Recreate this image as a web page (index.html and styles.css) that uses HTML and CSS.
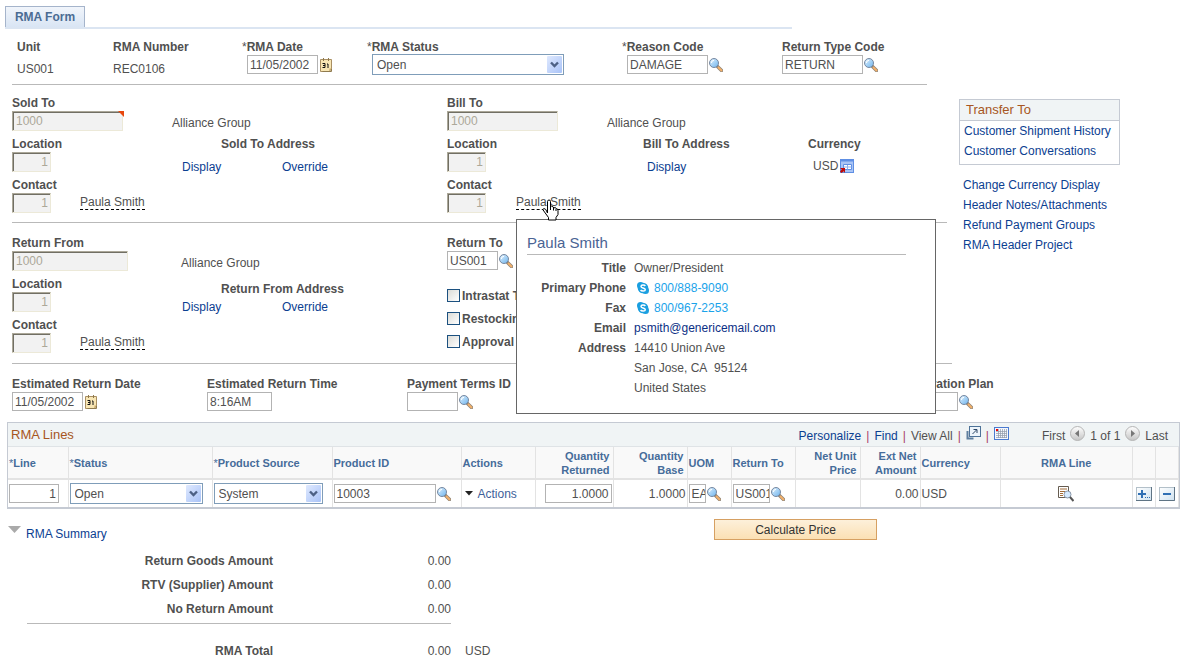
FILE: index.html
```html
<!DOCTYPE html>
<html lang="en">
<head>
    <meta charset="UTF-8">
    <meta name="viewport" content="width=device-width, initial-scale=1.0">
    <title>RMA Form</title>
    <link rel="stylesheet" href="styles.css">
</head>
<body>
    <!-- Shared icons -->
    <svg class="sprite" width="0" height="0" aria-hidden="true">
        <defs>
            <linearGradient id="glass" x1="0" y1="0" x2="1" y2="1">
                <stop offset="0" stop-color="#e3f2fd"/>
                <stop offset="1" stop-color="#6db4ee"/>
            </linearGradient>
            <linearGradient id="arrow-bg" x1="0" y1="0" x2="1" y2="1">
                <stop offset="0" stop-color="#dfe9fe"/>
                <stop offset="1" stop-color="#a9c3f8"/>
            </linearGradient>
            <linearGradient id="round-bg" x1="0" y1="0" x2="0" y2="1">
                <stop offset="0" stop-color="#ffffff"/>
                <stop offset="1" stop-color="#c4c4c4"/>
            </linearGradient>
            <linearGradient id="button-bg" x1="0" y1="0" x2="1" y2="1">
                <stop offset="0" stop-color="#ffffff"/>
                <stop offset="1" stop-color="#cfe2f0"/>
            </linearGradient>
        </defs>
        <symbol id="lens" viewBox="0 0 14 14">
            <path d="M8.500 8.500l4 4" stroke="#8d8478" stroke-width="3.400" stroke-linecap="square"/>
            <path d="M9 9l4 4" stroke="#f3b06a" stroke-width="2"/>
            <circle cx="5" cy="5" r="4.500" fill="url(#glass)" stroke="#7788a0"/>
            <path d="M2.400 5a2.600 2.600 0 0 1 2.600-2.600" fill="none" stroke="#fff"/>
        </symbol>
        <symbol id="calendar" viewBox="0 0 12 14">
            <path d="M.5 1.500h11v9l-2 3h-9z" fill="#f8e6b4" stroke="#a98f62"/>
            <path d="M11.500 10.500v3h-9" fill="none" stroke="#8f7a4e"/>
            <path d="M9.500 13.500v-3h2z" fill="#c9a868"/>
            <path d="M3.500 0v3M8.500 0v3" stroke="#8f7a4e"/>
            <path d="M2.500 5.500h2.500v4H2.500M3 7.500h2M7 6h1v4" fill="none" stroke="#111"/>
        </symbol>
        <symbol id="dropdown" viewBox="0 0 15 17">
            <rect width="15" height="17" rx="1" fill="url(#arrow-bg)"/>
            <path d="M4 6.500l3.500 3.500 3.500-3.500" fill="none" stroke="#4d6185" stroke-width="2.400"/>
        </symbol>
        <symbol id="skype" viewBox="0 0 12 12">
            <circle cx="3.500" cy="3.500" r="3.500" fill="#1a9fe0"/>
            <circle cx="8.500" cy="8.500" r="3.500" fill="#1a9fe0"/>
            <circle cx="6" cy="6" r="5.300" fill="#1a9fe0"/>
            <path d="M8.300 4C7.500 2.700 4 2.700 4 4.400S8.300 5.900 8.300 7.700 4.500 9.500 3.600 8" fill="none" stroke="#fff" stroke-width="1.500"/>
        </symbol>
        <symbol id="currency-window" viewBox="0 0 14 14">
            <rect x=".5" y=".5" width="13" height="13" fill="#a9c4f5" stroke="#5f8fe4"/>
            <path d="M1 1.500h12" stroke="#5f8fe4" stroke-width="2"/>
            <path d="M3.500 5.500h8v5h-8z" fill="#fff" stroke="#5f8fe4"/>
            <path d="M4 8h7.500M7.500 6v4.500" stroke="#8fb0ee"/>
            <path d="M0 9h5v5L3.700 12.300 1.500 14 0 12.500 1.700 10.500z" fill="#c00a0a"/>
        </symbol>
    </svg>

    <div class="layout">
        <main>
            <nav class="tabs">
                <a class="tab" href="#">RMA Form</a>
            </nav>

            <section class="form-header">
                <div class="field">
                    <span class="label">Unit</span>
                    <span class="value">US001</span>
                </div>
                <div class="field">
                    <span class="label">RMA Number</span>
                    <span class="value">REC0106</span>
                </div>
                <div class="field required">
                    <label for="rma-date"><b>*</b>RMA Date</label>
                    <div class="control">
                        <input class="w-date" id="rma-date" type="text" value="11/05/2002">
                        <button class="icon-button" type="button" aria-label="Choose RMA date"><svg width="12" height="14"><use href="#calendar"/></svg></button>
                    </div>
                </div>
                <div class="field required">
                    <label for="rma-status"><b>*</b>RMA Status</label>
                    <div class="control">
                        <span class="select w-status">
                            <select id="rma-status"><option>Open</option></select>
                            <svg width="15" height="17"><use href="#dropdown"/></svg>
                        </span>
                    </div>
                </div>
                <div class="field required">
                    <label for="reason-code"><b>*</b>Reason Code</label>
                    <div class="control">
                        <input class="w-code" id="reason-code" type="text" value="DAMAGE">
                        <button class="icon-button" type="button" aria-label="Look up reason code"><svg width="14" height="14"><use href="#lens"/></svg></button>
                    </div>
                </div>
                <div class="field">
                    <label for="return-type">Return Type Code</label>
                    <div class="control">
                        <input class="w-code" id="return-type" type="text" value="RETURN">
                        <button class="icon-button" type="button" aria-label="Look up return type code"><svg width="14" height="14"><use href="#lens"/></svg></button>
                    </div>
                </div>
            </section>

            <section class="parties">
                <div class="party">
                    <div class="party-row">
                        <div class="field">
                            <label for="sold-to">Sold To</label>
                            <span class="flagged"><input class="w-party" id="sold-to" type="text" value="1000" disabled></span>
                        </div>
                        <span class="party-name">Alliance Group</span>
                    </div>
                    <div class="party-row">
                        <div class="field">
                            <label for="sold-location">Location</label>
                            <input class="w-short number" id="sold-location" type="text" value="1" disabled>
                        </div>
                        <div class="address">
                            <h3>Sold To Address</h3>
                            <div class="address-links"><a href="#">Display</a><a href="#">Override</a></div>
                        </div>
                    </div>
                    <div class="party-row contact">
                        <div class="field">
                            <label for="sold-contact">Contact</label>
                            <input class="w-short number" id="sold-contact" type="text" value="1" disabled>
                        </div>
                        <div class="contact-card"><a class="contact-link" href="#">Paula Smith</a></div>
                    </div>
                </div>

                <div class="party bill-to">
                    <div class="party-row">
                        <div class="field">
                            <label for="bill-to">Bill To</label>
                            <input class="w-party" id="bill-to" type="text" value="1000" disabled>
                        </div>
                        <span class="party-name">Alliance Group</span>
                    </div>
                    <div class="party-row">
                        <div class="field">
                            <label for="bill-location">Location</label>
                            <input class="w-short number" id="bill-location" type="text" value="1" disabled>
                        </div>
                        <div class="address">
                            <h3>Bill To Address</h3>
                            <div class="address-links"><a href="#">Display</a></div>
                        </div>
                        <div class="currency">
                            <h3>Currency</h3>
                            <div class="currency-value">USD<button class="icon-button" type="button" aria-label="Currency details"><svg width="14" height="14"><use href="#currency-window"/></svg></button></div>
                        </div>
                    </div>
                    <div class="party-row contact">
                        <div class="field">
                            <label for="bill-contact">Contact</label>
                            <input class="w-short number" id="bill-contact" type="text" value="1" disabled>
                        </div>
                        <div class="contact-card">
                            <a class="contact-link" href="#">Paula Smith</a>
                            <div class="popup">
                                <h2>Paula Smith</h2>
                                <dl>
                                    <dt>Title</dt>
                                    <dd>Owner/President</dd>
                                    <dt>Primary Phone</dt>
                                    <dd><a class="phone" href="#"><svg width="12" height="12"><use href="#skype"/></svg>800/888-9090</a></dd>
                                    <dt>Fax</dt>
                                    <dd><a class="phone" href="#"><svg width="12" height="12"><use href="#skype"/></svg>800/967-2253</a></dd>
                                    <dt>Email</dt>
                                    <dd><a class="email" href="#">psmith@genericemail.com</a></dd>
                                    <dt>Address</dt>
                                    <dd>14410 Union Ave<br>San Jose, CA&nbsp; 95124<br>United States</dd>
                                </dl>
                            </div>
                            <svg class="pointer" width="17" height="22" viewBox="0 0 17 22" aria-hidden="true">
                                <path d="M5.500 14V2.500a1.500 1.500 0 0 1 3 0V8l1-.8 1.800.8.7 1 1.300-.6 1.200 1.400 1 .2.500 1.500v4l-2 3V21H6.500v-2.500L2.500 13 .8 10.500 2 9.500l1.800 1z" fill="#fff" stroke="#000"/>
                                <path d="M8.500 7v4M11.500 8v3.500M14 9.500V12" stroke="#000"/>
                            </svg>
                        </div>
                    </div>
                </div>
            </section>

            <section class="parties return-parties">
                <div class="party return-from">
                    <div class="party-row">
                        <div class="field">
                            <label for="return-from">Return From</label>
                            <input class="w-party" id="return-from" type="text" value="1000" disabled>
                        </div>
                        <span class="party-name">Alliance Group</span>
                    </div>
                    <div class="party-row">
                        <div class="field">
                            <label for="from-location">Location</label>
                            <input class="w-short number" id="from-location" type="text" value="1" disabled>
                        </div>
                        <div class="address">
                            <h3>Return From Address</h3>
                            <div class="address-links"><a href="#">Display</a><a href="#">Override</a></div>
                        </div>
                    </div>
                    <div class="party-row contact">
                        <div class="field">
                            <label for="from-contact">Contact</label>
                            <input class="w-short number" id="from-contact" type="text" value="1" disabled>
                        </div>
                        <div class="contact-card"><a class="contact-link" href="#">Paula Smith</a></div>
                    </div>
                </div>

                <div class="return-to">
                    <div class="field">
                        <label for="return-to">Return To</label>
                        <div class="control">
                            <input class="w-unit" id="return-to" type="text" value="US001">
                            <button class="icon-button" type="button" aria-label="Look up return to"><svg width="14" height="14"><use href="#lens"/></svg></button>
                        </div>
                    </div>
                    <div class="checks">
                        <label><input type="checkbox">Intrastat Trans</label>
                        <label><input type="checkbox">Restocking</label>
                        <label><input type="checkbox">Approval Req</label>
                    </div>
                </div>
            </section>
        </main>

        <aside>
            <div class="transfer">
                <h2>Transfer To</h2>
                <a href="#">Customer Shipment History</a>
                <a href="#">Customer Conversations</a>
            </div>
            <div class="side-links">
                <a href="#">Change Currency Display</a>
                <a href="#">Header Notes/Attachments</a>
                <a href="#">Refund Payment Groups</a>
                <a href="#">RMA Header Project</a>
            </div>
        </aside>
    </div>

    <section class="estimates">
        <div class="field">
            <label for="est-date">Estimated Return Date</label>
            <div class="control">
                <input class="w-date" id="est-date" type="text" value="11/05/2002">
                <button class="icon-button" type="button" aria-label="Choose return date"><svg width="12" height="14"><use href="#calendar"/></svg></button>
            </div>
        </div>
        <div class="field">
            <label for="est-time">Estimated Return Time</label>
            <div class="control"><input class="w-time" id="est-time" type="text" value="8:16AM"></div>
        </div>
        <div class="field">
            <label for="terms">Payment Terms ID</label>
            <div class="control">
                <input class="w-unit" id="terms" type="text">
                <button class="icon-button" type="button" aria-label="Look up payment terms"><svg width="14" height="14"><use href="#lens"/></svg></button>
            </div>
        </div>
        <div class="field">
            <label for="plan">Registration Plan</label>
            <div class="control">
                <input class="w-plan" id="plan" type="text">
                <button class="icon-button" type="button" aria-label="Look up plan"><svg width="14" height="14"><use href="#lens"/></svg></button>
            </div>
        </div>
    </section>

    <section class="lines">
        <div class="lines-bar">
            <h2>RMA Lines</h2>
            <div class="lines-tools">
                <a href="#">Personalize</a><i>|</i><a href="#">Find</a><i>|</i><span>View All</span><i>|</i>
                <button class="icon-button" type="button" aria-label="Zoom grid">
                    <svg width="15" height="14" viewBox="0 0 15 14">
                        <path d="M1.500 5v7.500h6" fill="none" stroke="#5f7f9f" stroke-width="2"/>
                        <rect x="3.500" y=".5" width="11" height="10" fill="#eef5fb" stroke="#4d7298"/>
                        <path d="M6.500 8l4-4M7.500 3.500H11V7" fill="none" stroke="#2c4766"/>
                    </svg>
                </button>
                <i>|</i>
                <button class="icon-button" type="button" aria-label="Download grid">
                    <svg width="15" height="13" viewBox="0 0 15 13">
                        <rect x=".5" y=".5" width="14" height="12" fill="#f4f7fd" stroke="#4a7ad0"/>
                        <path d="M2 4.500h11M2 6.500h11M2 8.500h11M2 10.500h11M4.500 2v9M6.500 2v9M8.500 2v9M10.500 2v9M12.500 2v9" stroke="#8f99a8" stroke-width=".7"/>
                        <path d="M2 2h2v2H2z" fill="#f00000"/>
                    </svg>
                </button>
            </div>
            <div class="lines-pager">
                <span>First</span>
                <button class="icon-button" type="button" aria-label="Previous row">
                    <svg width="15" height="15" viewBox="0 0 15 15"><circle cx="7.500" cy="7.500" r="7" fill="url(#round-bg)" stroke="#b5b5b5"/><path d="M9 4v7L5 7.500z" fill="#777"/></svg>
                </button>
                <span>1 of 1</span>
                <button class="icon-button" type="button" aria-label="Next row">
                    <svg width="15" height="15" viewBox="0 0 15 15"><circle cx="7.500" cy="7.500" r="7" fill="url(#round-bg)" stroke="#b5b5b5"/><path d="M6 4v7l4-3.500z" fill="#777"/></svg>
                </button>
                <span>Last</span>
            </div>
        </div>
        <table class="lines-table">
            <colgroup>
                <col class="c-line"><col class="c-status"><col class="c-source"><col class="c-product"><col class="c-actions">
                <col class="c-returned"><col class="c-base"><col class="c-uom"><col class="c-to"><col class="c-price">
                <col class="c-amount"><col class="c-currency"><col><col class="c-button"><col class="c-button">
            </colgroup>
            <thead>
                <tr>
                    <th><b>*</b>Line</th>
                    <th><b>*</b>Status</th>
                    <th><b>*</b>Product Source</th>
                    <th>Product ID</th>
                    <th>Actions</th>
                    <th class="number">Quantity Returned</th>
                    <th class="number">Quantity<br>Base</th>
                    <th>UOM</th>
                    <th>Return To</th>
                    <th class="number">Net Unit Price</th>
                    <th class="number">Ext Net Amount</th>
                    <th>Currency</th>
                    <th class="center">RMA Line</th>
                    <th></th>
                    <th></th>
                </tr>
            </thead>
            <tbody>
                <tr>
                    <td><input class="w-line number" type="text" value="1" aria-label="Line"></td>
                    <td>
                        <span class="select w-line-status">
                            <select aria-label="Status"><option>Open</option></select>
                            <svg width="15" height="17"><use href="#dropdown"/></svg>
                        </span>
                    </td>
                    <td>
                        <span class="select w-source">
                            <select aria-label="Product source"><option>System</option></select>
                            <svg width="15" height="17"><use href="#dropdown"/></svg>
                        </span>
                    </td>
                    <td>
                        <div class="control">
                            <input class="w-product" type="text" value="10003" aria-label="Product ID">
                            <button class="icon-button" type="button" aria-label="Look up product"><svg width="14" height="14"><use href="#lens"/></svg></button>
                        </div>
                    </td>
                    <td><a class="actions" href="#"><svg width="8" height="5" viewBox="0 0 8 5"><path d="M0 0h8L4 4.500z" fill="#222"/></svg>Actions</a></td>
                    <td class="number"><input class="w-quantity number" type="text" value="1.0000" aria-label="Quantity returned"></td>
                    <td class="number">1.0000</td>
                    <td>
                        <div class="control">
                            <input class="w-uom" type="text" value="EA" aria-label="UOM">
                            <button class="icon-button" type="button" aria-label="Look up UOM"><svg width="14" height="14"><use href="#lens"/></svg></button>
                        </div>
                    </td>
                    <td>
                        <div class="control">
                            <input class="w-to" type="text" value="US001" aria-label="Return to">
                            <button class="icon-button" type="button" aria-label="Look up return to"><svg width="14" height="14"><use href="#lens"/></svg></button>
                        </div>
                    </td>
                    <td></td>
                    <td class="number">0.00</td>
                    <td>USD</td>
                    <td class="center">
                        <button class="icon-button" type="button" aria-label="RMA line details">
                            <svg width="16" height="16" viewBox="0 0 16 16">
                                <path d="M.5.5h10v11H.5z" fill="#fff" stroke="#665c50"/>
                                <path d="M2 3h7M2 5.500h5M2 7.500h3M2 9.500h3" stroke="#a06a38"/>
                                <circle cx="9.500" cy="8.500" r="3.500" fill="#d5eaff" stroke="#8a97a8"/>
                                <path d="M12 11l3.500 4" stroke="#555" stroke-width="2"/>
                            </svg>
                        </button>
                    </td>
                    <td>
                        <button class="icon-button" type="button" aria-label="Add row">
                            <svg width="16" height="14" viewBox="0 0 16 14">
                                <rect x=".5" y=".5" width="15" height="13" fill="url(#button-bg)" stroke="#b3c0c9"/>
                                <path d="M15.500 0v13.500H0" fill="none" stroke="#5f7484"/>
                                <path d="M2 7h8M6 3v8" stroke="#2f6fb4" stroke-width="2"/>
                                <path d="M9 10.500h1M11 10.500h1M13 10.500h1" stroke="#2f6fb4"/>
                            </svg>
                        </button>
                    </td>
                    <td>
                        <button class="icon-button" type="button" aria-label="Delete row">
                            <svg width="16" height="14" viewBox="0 0 16 14">
                                <rect x=".5" y=".5" width="15" height="13" fill="url(#button-bg)" stroke="#b3c0c9"/>
                                <path d="M15.500 0v13.500H0" fill="none" stroke="#5f7484"/>
                                <path d="M4 7h8" stroke="#2f6fb4" stroke-width="2"/>
                            </svg>
                        </button>
                    </td>
                </tr>
            </tbody>
        </table>
    </section>

    <section class="summary">
        <div class="summary-main">
            <a class="summary-title" href="#"><svg width="13" height="7" viewBox="0 0 13 7"><path d="M0 0h13L6.500 7z" fill="#aaa"/></svg>RMA Summary</a>
            <table class="totals">
                <tbody>
                    <tr><th>Return Goods Amount</th><td>0.00</td></tr>
                    <tr><th>RTV (Supplier) Amount</th><td>0.00</td></tr>
                    <tr><th>No Return Amount</th><td>0.00</td></tr>
                </tbody>
            </table>
            <table class="totals grand">
                <tbody>
                    <tr><th>RMA Total</th><td>0.00</td><td class="unit">USD</td></tr>
                </tbody>
            </table>
        </div>
        <button class="calculate" type="button">Calculate Price</button>
    </section>
</body>
</html>
```
FILE: styles.css
```css
* {
    margin: 0;
    padding: 0;
    box-sizing: border-box;
}

body {
    font-family: "Liberation Sans", Arial, sans-serif;
    font-size: 12px;
    line-height: 16px;
    color: #505050;
    background-color: #ffffff;
}

.sprite {
    position: absolute;
}

svg {
    display: block;
    flex: none;
}

a {
    color: #0b4091;
    text-decoration: none;
}

input,
select,
button {
    font: inherit;
    color: inherit;
}

input {
    height: 19px;
    padding: 0 0 0 2px;
    border: 1px solid #b3b3b3;
    background-color: #ffffff;
}

input.number {
    padding-right: 2px;
}

input:disabled {
    height: 20px;
    padding-left: 3px;
    border-color: #aca899 #ece9d8 #ece9d8 #aca899;
    box-shadow: inset 1px 1px #716f64;
    background-color: #f2f2f2;
    color: #aca899;
}

label,
.label,
h3 {
    display: block;
    font-size: 12px;
    line-height: 16px;
    font-weight: bold;
    white-space: nowrap;
}

label b {
    font-weight: normal;
}

.number {
    text-align: right;
}

.center {
    text-align: center;
}

.icon-button {
    border: none;
    background: none;
    cursor: pointer;
    flex: none;
}

.control {
    display: flex;
    align-items: center;
    gap: 1px;
    height: 19px;
}

.w-date + .icon-button {
    margin-left: 1px;
}

.value {
    display: block;
    line-height: 29px;
}

.required .control {
    padding-left: 5px;
}

/* Drop-downs */
.select {
    position: relative;
    display: block;
}

.select select {
    appearance: none;
    display: block;
    width: 100%;
    height: 21px;
    padding: 0 20px 0 4px;
    border: 1px solid #7f9db9;
    background-color: #ffffff;
}

.select svg {
    position: absolute;
    top: 2px;
    right: 2px;
    pointer-events: none;
}

/* Control widths */
.w-date { width: 71px; }
.w-status { width: 192px; }
.w-code { width: 81px; }
.w-party { width: 111px; }
.w-short { width: 39px; }
.w-unit { width: 51px; }
.w-time { width: 65px; }
.w-plan { width: 63px; }
.w-line { width: 50px; }
.w-line-status { width: 133px; }
.w-source { width: 109px; }
.w-product { width: 102px; }
.w-quantity { width: 67px; }
.w-uom { width: 17px; }
.w-to { width: 37px; }

/* Page top */
.layout {
    display: grid;
    grid-template-columns: minmax(0, 1fr) 222px;
}

.tabs {
    display: flex;
    margin: 6px 167px 0 5px;
    border-bottom: 2px solid #dbe5f2;
}

.tab {
    width: 80px;
    line-height: 20px;
    border: 1px solid #a5b4cb;
    border-bottom: none;
    background: linear-gradient(#f1f5fb, #d9e5f4);
    color: #4b6c93;
    font-weight: bold;
    text-align: center;
}

.form-header {
    display: grid;
    grid-template-columns: 96px 129px 125px 255px 160px 1fr;
    margin: 0 32px 0 12px;
    padding: 10px 0 0 5px;
    border-bottom: 1px solid #b9b9b9;
}

/* Sold to, bill to, return from */
.parties {
    display: grid;
    grid-template-columns: 435px 1fr;
    margin: 0 12px 0 12px;
    padding: 10px 0 4px;
    border-bottom: 1px solid #b9b9b9;
}

.return-parties {
    margin-right: 7px;
    padding: 12px 0 5px;
}

.party-row {
    display: flex;
    height: 41px;
}

.party-row .field {
    width: 160px;
}

.party-row input {
    display: block;
}

.party-row.contact .field {
    width: 68px;
}

.bill-to .contact .field {
    width: 69px;
}

.return-from .party-row:first-child .field {
    width: 169px;
}

.return-from .w-party {
    width: 116px;
}

.party-name {
    padding-top: 20px;
}

.flagged {
    position: relative;
    display: block;
    width: 112px;
}

.flagged::after {
    content: "";
    position: absolute;
    top: 0;
    right: 0;
    border-top: 6px solid #e8470c;
    border-left: 6px solid transparent;
}

.address {
    margin-left: 10px;
}

.address h3 {
    padding-left: 39px;
}

.address-links {
    display: grid;
    grid-template-columns: 100px auto;
    padding-top: 5px;
    line-height: 20px;
}

.return-from .address {
    padding-top: 5px;
}

.return-from .address-links {
    padding-top: 0;
}

.bill-to .address {
    width: 165px;
    margin-left: 36px;
}

.bill-to .address h3 {
    padding-left: 0;
}

.bill-to .address-links {
    padding-left: 4px;
}

.currency-value {
    display: flex;
    align-items: center;
    gap: 2px;
    padding: 4px 0 0 5px;
    line-height: 20px;
}

.contact-card {
    position: relative;
    height: 33px;
    padding-top: 18px;
}

.contact-link {
    display: block;
    line-height: 14px;
    border-bottom: 1px dashed #000000;
    color: #505050;
}

.popup {
    position: absolute;
    top: 42px;
    left: 0;
    z-index: 1;
    width: 420px;
    padding: 12px 29px 15px 10px;
    border: 1px solid #666666;
    background-color: #ffffff;
}

.popup h2 {
    margin-bottom: 3px;
    border-bottom: 1px solid #b9b9b9;
    color: #4a6494;
    font-size: 15px;
    line-height: 22px;
    font-weight: normal;
}

.popup dl {
    display: grid;
    grid-template-columns: 99px 1fr;
    column-gap: 8px;
    line-height: 20px;
}

.popup dt {
    font-weight: bold;
    text-align: right;
}

.phone {
    display: flex;
    align-items: center;
    gap: 5px;
    padding-left: 3px;
    color: #1aa3ea;
}

.email {
    color: #0b2f85;
}

.pointer {
    position: absolute;
    top: 22px;
    left: 26px;
    z-index: 2;
}

.checks {
    padding-top: 14px;
}

.checks label {
    display: flex;
    align-items: center;
    gap: 2px;
    height: 23px;
}

.checks input {
    appearance: none;
    width: 13px;
    height: 13px;
    padding: 0;
    border: 1px solid #1c5180;
    background: linear-gradient(135deg, #dcdcd7, #ffffff);
}

/* Right-hand links */
aside {
    padding-top: 99px;
}

.transfer {
    width: 161px;
    padding-bottom: 3px;
    border: 1px solid #c5cad3;
}

.transfer h2 {
    padding: 0 6px;
    border-bottom: 1px solid #c5cad3;
    background-color: #f0f4f5;
    color: #a75622;
    font-size: 13px;
    line-height: 20px;
    font-weight: normal;
}

.transfer a,
.side-links a {
    display: block;
    padding-left: 4px;
    line-height: 20px;
    white-space: nowrap;
}

.side-links {
    padding-top: 10px;
}

/* Estimated return */
.estimates {
    display: grid;
    grid-template-columns: 195px 200px 488px 1fr;
    padding: 12px 12px 11px;
}

/* RMA lines grid */
.lines {
    margin: 0 1px 0 7px;
    border: 1px solid #c5cad3;
    border-bottom-width: 2px;
}

.lines-bar {
    display: flex;
    height: 24px;
    padding: 0 11px 0 3px;
    border-bottom: 1px solid #dfe3e6;
    background-color: #f0f4f5;
}

.lines-bar h2 {
    margin-right: auto;
    color: #a75622;
    font-size: 13px;
    line-height: 23px;
    font-weight: normal;
}

.lines-tools,
.lines-pager {
    display: flex;
    gap: 5px;
    line-height: 27px;
}

.lines-bar .icon-button {
    height: 20px;
}

.lines-tools i {
    color: #a83c6a;
    font-style: normal;
}

.lines-pager {
    margin-left: 33px;
}

.lines-table {
    width: 100%;
    border-collapse: collapse;
    table-layout: fixed;
}

.lines-table th,
.lines-table td {
    padding: 0 1px;
    border-right: 1px solid #e3e3e3;
    text-align: left;
}

.lines-table th {
    height: 32px;
    border-bottom: 2px solid #e3e3e3;
    background-color: #f9f9f9;
    color: #466c9a;
    font-size: 11px;
    line-height: 14px;
}

.lines-table td {
    height: 28px;
}

.lines-table th b {
    font-weight: normal;
}

.lines-table .number {
    text-align: right;
}

.lines-table th.number {
    padding-right: 3px;
}

.lines-table .center {
    text-align: center;
}

.lines-table input,
.lines-table .icon-button {
    display: block;
}

.lines-table .number input {
    margin-left: auto;
}

.lines-table td .icon-button {
    margin-left: auto;
    margin-right: auto;
}

.lines-table .control .icon-button {
    margin: 0;
}

.c-line { width: 60px; }
.c-status { width: 144px; }
.c-source { width: 120px; }
.c-product { width: 129px; }
.c-actions { width: 74px; }
.c-returned { width: 78px; }
.c-base { width: 74px; }
.c-uom { width: 44px; }
.c-to { width: 64px; }
.c-price { width: 65px; }
.c-amount { width: 60px; }
.c-currency { width: 80px; }
.c-button { width: 23px; }

.actions {
    display: flex;
    align-items: center;
    gap: 5px;
    padding-left: 2px;
    color: #3f5f9a;
}

/* Summary */
.summary {
    display: flex;
    align-items: flex-start;
    padding: 10px 8px 0;
}

.summary-main {
    width: 706px;
}

.summary-title {
    display: flex;
    gap: 5px;
    line-height: 30px;
    height: 30px;
}

.summary-title svg {
    margin-top: 7px;
}

.totals {
    margin-left: 19px;
    padding-bottom: 2px;
    border-collapse: separate;
    border-spacing: 0;
    border-bottom: 1px solid #b9b9b9;
}

.totals th {
    width: 246px;
    height: 24px;
    text-align: right;
}

.totals td {
    width: 178px;
    text-align: right;
}

.totals.grand {
    margin-top: 15px;
    border-bottom: none;
}

.totals .unit {
    width: 54px;
    padding-left: 14px;
    text-align: left;
}

.calculate {
    width: 163px;
    height: 21px;
    border: 1px solid #d6a062;
    background: linear-gradient(#fdf0da, #fbe0b4);
    color: #333333;
}
```
